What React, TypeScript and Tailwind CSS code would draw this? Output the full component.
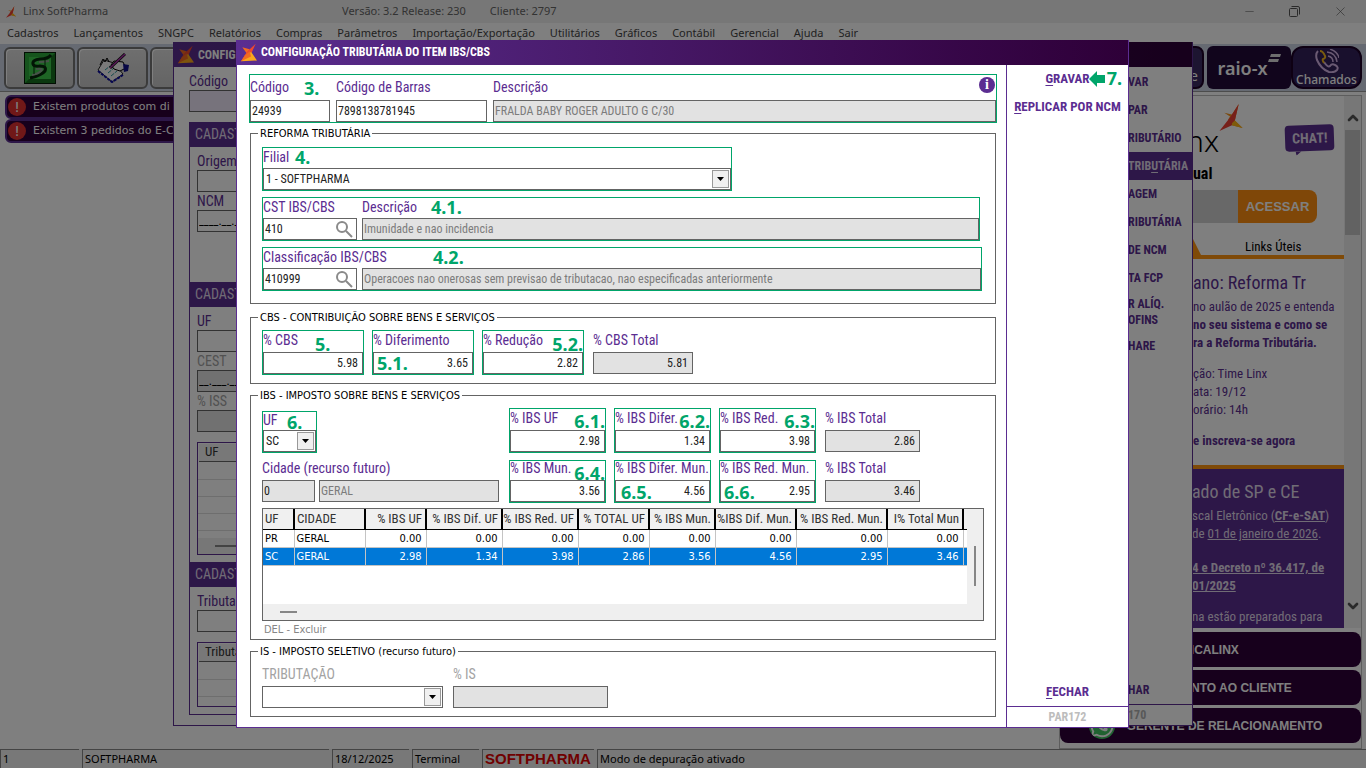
import { useId, useState } from 'react';
import type { ReactNode } from 'react';
import { ChevronDown, ChevronUp, Minus, X } from 'lucide-react';
import { FaWhatsapp } from 'react-icons/fa';

const menuItems = [
  'Cadastros', 'Lançamentos', 'SNGPC', 'Relatórios', 'Compras', 'Parâmetros', 'Importação/Exportação',
  'Utilitários', 'Gráficos', 'Contábil', 'Gerencial', 'Ajuda', 'Sair',
];

const columns = [
  { title: 'UF', width: 'w-[31px]' },
  { title: 'CIDADE', width: 'w-[71px]' },
  { title: '% IBS UF', width: 'w-[61px]' },
  { title: '% IBS Dif. UF', width: 'w-[76px]' },
  { title: '% IBS Red. UF', width: 'w-[76px]' },
  { title: '% TOTAL UF', width: 'w-[71px]' },
  { title: '% IBS Mun.', width: 'w-[66px]' },
  { title: '%IBS Dif. Mun.', width: 'w-[81px]' },
  { title: '% IBS Red. Mun.', width: 'w-[91px]' },
  { title: 'I% Total Mun', width: 'w-[76px]' },
];

const rows = [
  ['PR', 'GERAL', '0.00', '0.00', '0.00', '0.00', '0.00', '0.00', '0.00', '0.00'],
  ['SC', 'GERAL', '2.98', '1.34', '3.98', '2.86', '3.56', '4.56', '2.95', '3.46'],
];

function LinxMark({ className }: { className: string }) {
  return (
    <svg viewBox="0 0 24 28" className={className} aria-hidden="true">
      <path d="M5 9 L13 11 L20 0 L16 17 L24 25 L13 22 L9 16 L11 13 Z" fill="#f7941d" />
      <path d="M20 0 L16 17 L13 22 L0 28 L11 14 Z" fill="#ee4035" />
      <path d="M13 20 L16 17 L24 25 L13 22 Z" fill="#fdb515" />
    </svg>
  );
}

function TitleMark({ className }: { className: string }) {
  return (
    <svg viewBox="0 0 24 28" className={className} aria-hidden="true">
      <path d="M2 6 L13 9 L9 16 Z" fill="#f26a21" />
      <path d="M22 1 L16 14 L11 22 L0 27 L9 13 Z" fill="#f0492e" />
      <path d="M15 13 L24 26 L0 27 L10 19 Z" fill="#fba81c" />
      <path d="M13 12 L15 20 L0 27 L6 18 Z" fill="#f26a21" />
    </svg>
  );
}

// Número da etapa sobre o campo
function Mark({ n, place }: { n: string; place: string }) {
  return (
    <span
      className={`pointer-events-none absolute z-10 font-['Noto_Sans',sans-serif] text-lg leading-[18px] font-bold text-[#00a56a] ${place}`}
    >
      {n}
    </span>
  );
}

const boxClass = 'block h-[22px] w-full border border-[#646464] text-xs leading-5 outline-none';
const labelClass = 'block text-sm whitespace-nowrap';

interface FieldProps {
  label: string;
  value: string;
  labelHeight?: string;
  width?: string;
  marked?: boolean;
  numeric?: boolean;
  disabled?: boolean;
  total?: boolean;
  search?: boolean;
  children?: ReactNode;
}

function Field({
  label, value, labelHeight = 'leading-[18px] pb-0.5', width = '', marked, numeric, disabled, total, search, children,
}: FieldProps) {
  const id = useId();
  return (
    <div className={`relative ${marked ? 'border border-[#00a56a]' : ''} ${width}`}>
      <label htmlFor={id} className={`${labelClass} ${labelHeight} text-[#5b2d91]`}>
        {label}
      </label>
      <div className="relative">
        <input
          id={id}
          defaultValue={value}
          disabled={disabled}
          readOnly={total}
          className={`${boxClass} ${numeric ? 'pr-1 text-right' : 'pl-px'} ${
            disabled ? 'bg-[#e2e2e2] text-[#7c7c7c]' : total ? 'bg-[#e2e2e2] text-[#222]' : 'bg-white text-[#222]'
          }`}
        />
        {search && (
          <button aria-label="Pesquisar" className="absolute top-px right-1 flex h-5 w-[18px] items-center justify-center text-[#8a8a8a]">
            <svg viewBox="0 0 18 18" className="size-[18px]" fill="none" stroke="currentColor" strokeWidth="2" aria-hidden="true">
              <circle cx="7" cy="7" r="5" />
              <path d="M11 11 L17 17" />
            </svg>
          </button>
        )}
      </div>
      {children}
    </div>
  );
}

interface ComboProps {
  label: string;
  value: string;
  labelHeight: string;
  width: string;
  marked?: boolean;
  muted?: boolean;
  children?: ReactNode;
}

function Combo({ label, value, labelHeight, width, marked, muted, children }: ComboProps) {
  const id = useId();
  return (
    <div className={`relative ${marked ? 'border border-[#00a56a]' : ''} ${width}`}>
      <label htmlFor={id} className={`${labelClass} ${labelHeight} ${muted ? 'text-[#a3a3a3]' : 'text-[#5b2d91]'}`}>
        {label}
      </label>
      <div className="relative">
        <select id={id} className={`${boxClass} appearance-none bg-white pl-0.5 text-[#222]`}>
          <option>{value}</option>
        </select>
        <span className="pointer-events-none absolute top-0.5 right-0.5 flex h-[18px] w-[17px] items-center justify-center border border-[#999] bg-[#f0f0f0]">
          <svg width="7" height="4" viewBox="0 0 7 4" aria-hidden="true">
            <path d="M0 0 H7 L3.5 4 Z" fill="#000" />
          </svg>
        </span>
      </div>
      {children}
    </div>
  );
}

function Group({ title, className, children }: { title: string; className: string; children: ReactNode }) {
  return (
    <fieldset className={`mx-px border border-[#646464] pr-[11px] pl-[11px] ${className}`}>
      <legend className="-ml-1 px-0.5 font-['DejaVu_Sans_Condensed','DejaVu_Sans',sans-serif] text-[11px] leading-4 text-black">
        {title}
      </legend>
      {children}
    </fieldset>
  );
}

function TitleBar({ children }: { children: ReactNode }) {
  return (
    <header className="flex h-[25px] items-center gap-1 bg-linear-to-r from-[#5b2e91] to-[#2e0038] pl-1 text-xs font-bold text-white">
      <TitleMark className="h-[19px] w-4" />
      <h2 className="whitespace-nowrap">{children}</h2>
    </header>
  );
}

function SideButton({ first, rest }: { first: string; rest: string }) {
  return (
    <button className="flex h-7 w-full items-center justify-center text-[13px] font-bold text-[#5b2d91]">
      <span className="underline underline-offset-2">{first}</span>
      {rest}
    </button>
  );
}

function RateTable() {
  const [selected, setSelected] = useState(1);
  return (
    <div className="mt-[5px] flex h-[113px] border border-[#646464] bg-[#efefef]">
      <div className="flex min-w-0 flex-1 flex-col">
        <div className="flex-1 overflow-hidden bg-white">
          <table className="w-full table-fixed border-collapse">
            <thead>
              <tr className="h-[21px] border-b border-black bg-[#f0f0f0] text-[13px] leading-5 text-[#333]">
                {columns.map(({ title, width }, i) => (
                  <th
                    key={title}
                    className={`${width} border-r-2 border-black p-0 font-normal whitespace-nowrap ${i < 2 ? 'pl-0.5 text-left' : 'pr-[3px] text-right'}`}
                  >
                    {title}
                  </th>
                ))}
                <th className="p-0" />
              </tr>
            </thead>
            <tbody className="font-['DejaVu_Sans_Condensed','DejaVu_Sans',sans-serif] text-[11px]">
              {rows.map((row, r) => (
                <tr
                  key={row[0]}
                  onClick={() => setSelected(r)}
                  className={`h-[18px] border-b border-[#c4c4c4] ${r === selected ? 'bg-[#0078d7] text-white' : 'bg-white text-black'}`}
                >
                  {row.map((cell, i) => (
                    <td key={i} className={`border-r border-[#c4c4c4] p-0 leading-4 ${i < 2 ? 'pl-0.5 text-left' : 'pr-1 text-right'}`}>
                      {cell}
                    </td>
                  ))}
                  <td className="p-0" />
                </tr>
              ))}
            </tbody>
          </table>
        </div>
        <div className="flex h-4 items-center pl-[17px]">
          <div className="h-0.5 w-[17px] bg-[#868686]" />
        </div>
      </div>
      <div className="flex w-4 justify-center pt-[37px]">
        <div className="h-10 w-0.5 bg-[#868686]" />
      </div>
    </div>
  );
}

function TaxDialog() {
  return (
    <section className="w-full max-w-[893px] border border-t-0 border-[#5b2d91] bg-white">
      <TitleBar>CONFIGURAÇÃO TRIBUTÁRIA DO ITEM IBS/CBS</TitleBar>
      <div className="flex">
        <form className="min-w-0 flex-1 pt-[9px] pr-[9px] pb-[10px] pl-3" onSubmit={(e) => e.preventDefault()}>
          <div className="relative flex gap-[6px] border border-[#00a56a]">
            <Field label="Código" value="24939" labelHeight="leading-[25px]" width="w-20" />
            <Field label="Código de Barras" value="7898138781945" labelHeight="leading-[25px]" width="w-[151px]" />
            <Field label="Descrição" value="FRALDA BABY ROGER ADULTO G C/30" labelHeight="leading-[25px]" width="flex-1" disabled />
            <Mark n="3." place="left-[54px] top-1" />
            <span className="absolute top-0.5 right-px flex size-4 items-center justify-center rounded-full bg-[#5b2d91] font-['Liberation_Serif',serif] text-sm leading-4 font-bold text-white">
              i
            </span>
          </div>

          <Group title="REFORMA TRIBUTÁRIA" className="mt-[3px] pt-[5px] pb-3">
            <div className="flex flex-col gap-1.5">
              <Combo label="Filial" value="1 - SOFTPHARMA" labelHeight="leading-[18px] pb-0.5" width="w-[470px]" marked>
                <Mark n="4." place="left-8 top-0" />
              </Combo>
              <div className="relative flex w-[718px] gap-[5px] border border-[#00a56a]">
                <Field label="CST IBS/CBS" value="410" width="w-[94px]" search />
                <Field label="Descrição" value="Imunidade e nao incidencia" width="flex-1" disabled />
                <Mark n="4.1." place="left-[168px] top-0" />
              </div>
              <div className="relative flex w-[720px] gap-[5px] border border-[#00a56a]">
                <Field label="Classificação IBS/CBS" value="410999" width="w-[94px]" search />
                <div className="flex-1 pt-5">
                  <input
                    aria-label="Descrição da classificação"
                    disabled
                    defaultValue="Operacoes nao onerosas sem previsao de tributacao, nao especificadas anteriormente"
                    className={`${boxClass} bg-[#e2e2e2] pl-px text-[#7c7c7c]`}
                  />
                </div>
                <Mark n="4.2." place="left-[170px] top-0" />
              </div>
            </div>
          </Group>

          <Group title="CBS - CONTRIBUIÇÃO SOBRE BENS E SERVIÇOS" className="mt-1.5 pt-1 pb-2">
            <div className="flex items-end gap-2">
              <Field label="% CBS" value="5.98" labelHeight="leading-[19px] pb-0.5" width="w-[102px]" marked numeric>
                <Mark n="5." place="left-[52px] top-1" />
              </Field>
              <Field label="% Diferimento" value="3.65" labelHeight="leading-[19px] pb-0.5" width="w-[102px]" marked numeric>
                <Mark n="5.1." place="left-1 top-[23px]" />
              </Field>
              <Field label="% Redução" value="2.82" labelHeight="leading-[19px] pb-0.5" width="w-[102px]" marked numeric>
                <Mark n="5.2." place="right-0 top-1" />
              </Field>
              <div className="pb-px pl-px">
                <Field label="% CBS Total" value="5.81" labelHeight="leading-[19px] pb-0.5" width="w-[100px]" total numeric />
              </div>
            </div>
          </Group>

          <Group title="IBS - IMPOSTO SOBRE BENS E SERVIÇOS" className="mt-1 pt-1">
            <div className="flex items-end gap-2">
              <div className="w-[239px]">
                <Combo label="UF" value="SC" labelHeight="leading-4 pb-0.5" width="w-[55px]" marked>
                  <Mark n="6." place="left-6 top-px" />
                </Combo>
              </div>
              <Field label="% IBS UF" value="2.98" labelHeight="leading-[19px] pb-0.5" width="w-[97px]" marked numeric>
                <Mark n="6.1." place="right-0 top-[3px]" />
              </Field>
              <Field label="% IBS Difer." value="1.34" labelHeight="leading-[19px] pb-0.5" width="w-[97px]" marked numeric>
                <Mark n="6.2." place="right-0 top-[3px]" />
              </Field>
              <Field label="% IBS Red." value="3.98" labelHeight="leading-[19px] pb-0.5" width="w-[97px]" marked numeric>
                <Mark n="6.3." place="right-0 top-[3px]" />
              </Field>
              <div className="pb-px pl-px">
                <Field label="% IBS Total" value="2.86" labelHeight="leading-[19px] pb-0.5" width="w-[95px]" total numeric />
              </div>
            </div>
            <div className="mt-[7px] flex items-end gap-2">
              <div className="w-[239px] pr-0.5 pb-px">
                <label htmlFor="cidade" className={`${labelClass} pb-1 leading-4 text-[#5b2d91]`}>
                  Cidade (recurso futuro)
                </label>
                <div className="flex gap-1">
                  <div className="w-[53px]">
                    <input id="cidade" readOnly defaultValue="0" className={`${boxClass} bg-[#e2e2e2] pl-px text-[#222]`} />
                  </div>
                  <div className="flex-1">
                    <input aria-label="Nome da cidade" disabled defaultValue="GERAL" className={`${boxClass} bg-[#e2e2e2] pl-px text-[#7c7c7c]`} />
                  </div>
                </div>
              </div>
              <Field label="% IBS Mun." value="3.56" labelHeight="leading-[15px] pb-1" width="w-[97px]" marked numeric>
                <Mark n="6.4." place="right-0 top-[3px]" />
              </Field>
              <Field label="% IBS Difer. Mun." value="4.56" labelHeight="leading-[15px] pb-1" width="w-[97px]" marked numeric>
                <Mark n="6.5." place="left-1.5 top-[22px]" />
              </Field>
              <Field label="% IBS Red. Mun." value="2.95" labelHeight="leading-[15px] pb-1" width="w-[97px]" marked numeric>
                <Mark n="6.6." place="left-1 top-[22px]" />
              </Field>
              <div className="pb-px pl-px">
                <Field label="% IBS Total" value="3.46" labelHeight="leading-[15px] pb-1" width="w-[95px]" total numeric />
              </div>
            </div>
            <RateTable />
            <p className="pl-0.5 font-['DejaVu_Sans_Condensed','DejaVu_Sans',sans-serif] text-[11px] leading-[18px] text-[#868686]">
              DEL - Excluir
            </p>
          </Group>

          <Group title="IS - IMPOSTO SELETIVO (recurso futuro)" className="mt-1 pt-1 pb-2">
            <div className="flex gap-[10px]">
              <Combo label="TRIBUTAÇÃO" value="" labelHeight="leading-5 pb-0.5" width="w-[181px]" muted />
              <div className="w-[155px]">
                <label htmlFor="is" className={`${labelClass} pb-0.5 leading-5 text-[#a3a3a3]`}>% IS</label>
                <input id="is" disabled className={`${boxClass} bg-[#e2e2e2]`} />
              </div>
            </div>
          </Group>
        </form>

        <aside className="flex w-[122px] flex-col border-l border-[#5b2d91]">
          <div className="relative">
            <SideButton first="G" rest="RAVAR" />
            <svg viewBox="0 0 16 16" className="absolute top-1.5 right-[23px] size-4" aria-hidden="true">
              <path d="M0 8 L8 0 V4 H16 V12 H8 V16 Z" fill="#00a56a" />
            </svg>
            <Mark n="7." place="right-1.5 top-1" />
          </div>
          <SideButton first="R" rest="EPLICAR POR NCM" />
          <div className="mt-auto">
            <SideButton first="F" rest="ECHAR" />
          </div>
          <p className="border-t border-[#5b2d91] text-center text-xs leading-5 font-bold text-[#bdbdbd]">PAR172</p>
        </aside>
      </div>
    </section>
  );
}

function ItemField({ label, value = '', muted }: { label: string; value?: string; muted?: boolean }) {
  const id = useId();
  return (
    <div>
      <label htmlFor={id} className={`${labelClass} leading-[18px] ${muted ? 'text-[#a3a3a3]' : 'text-[#5b2d91]'}`}>{label}</label>
      <input id={id} defaultValue={value} className={`${boxClass} pl-px text-black ${muted ? 'bg-[#e2e2e2]' : 'bg-white'}`} />
    </div>
  );
}

function PanelTitle() {
  return <h3 className="h-[25px] bg-[#5b2e91] pl-[5px] text-sm leading-[25px] text-[#e0d8ea]">CADAST</h3>;
}

function EmptyGrid({ title, height, scroll }: { title: string; height: string; scroll?: boolean }) {
  return (
    <div className={`mt-[10px] flex flex-col border border-[#5b2d91] ${height}`}>
      <div className="m-px h-[18px] border-r border-b border-[#666] bg-[#f0f0f0] pl-1.5 text-[13px] leading-4 text-[#333]">{title}</div>
      <div className="flex-1 bg-[repeating-linear-gradient(to_bottom,#fff_0_16px,#ddd_16px_17px)]" />
      {scroll && (
        <div className="flex h-4 items-center bg-[#efefef] pl-[17px]">
          <div className="h-0.5 w-16 bg-[#868686]" />
        </div>
      )}
    </div>
  );
}

function ItemDialog() {
  const item = 'flex h-7 w-full items-center text-xs font-bold whitespace-nowrap';
  return (
    <section className="w-full max-w-[1020px] border border-t-0 border-[#5b2d91] bg-white">
      <TitleBar>CONFIG</TitleBar>
      <div className="flex text-[#5b2d91]">
        <div className="min-w-0 flex-1 px-[15px] pt-[5px] pb-[10px]">
          <label htmlFor="item-codigo" className={`${labelClass} leading-[18px]`}>Código</label>
          <input id="item-codigo" className={`${boxClass} bg-[#eee6f8]`} />
          <div className="mt-[10px] border border-t-0 border-[#5b2d91]">
            <PanelTitle />
            <div className="px-[7px] pt-[5px] pb-[50px]">
              <ItemField label="Origem" />
              <ItemField label="NCM" value="____.__.__" />
            </div>
            <PanelTitle />
            <div className="px-[7px] pt-[5px] pb-[7px]">
              <ItemField label="UF" />
              <ItemField label="CEST" value="__.___.__" muted />
              <ItemField label="% ISS" muted />
              <EmptyGrid title="UF" height="h-[113px]" scroll />
            </div>
            <PanelTitle />
            <div className="px-[7px] pt-[5px] pb-[7px]">
              <ItemField label="Tributa" />
              <EmptyGrid title="Tributa" height="h-[65px]" />
            </div>
          </div>
        </div>
        <nav className="flex w-[64px] flex-col pt-px">
          <button className={item}>VAR</button>
          <button className={item}>PAR</button>
          <button className={item}>RIBUTÁRIO</button>
          <button className={`${item} bg-[#5b2e91] text-[#e0d8ea]`}>
            TRIB<span className="underline underline-offset-2">U</span>TÁRIA
          </button>
          <button className={item}>AGEM</button>
          <button className={item}>RIBUTÁRIA</button>
          <button className={item}>DE NCM</button>
          <button className={item}>TA FCP</button>
          <button className="h-10 w-full text-left text-xs leading-4 font-bold whitespace-nowrap">
            R ALÍQ.<br />OFINS
          </button>
          <button className={item}>HARE</button>
          <button className={`${item} mt-auto`}>HAR</button>
          <p className="border-t border-[#5b2d91] text-xs leading-5 font-bold text-[#b0b0b0]">170</p>
        </nav>
      </div>
    </section>
  );
}

function Toolbar() {
  const gray = 'flex h-[42px] w-[71px] items-center justify-center rounded-md border-2 border-[#777] bg-linear-to-b from-[#dedede] to-[#c8c8c8] shadow-[inset_1px_1px_0_#fff]';
  return (
    <div className="flex h-12 items-center gap-0.5 border-b border-[#999] bg-[#ccd4e4] pl-1">
      <button className={gray} aria-label="SoftPharma">
        <svg viewBox="0 0 32 32" className="size-8" aria-hidden="true">
          <rect width="32" height="32" fill="#041f06" />
          <rect x="1" y="1" width="30" height="30" fill="#2da83a" />
          <path d="M1 31 L5 27 H27 V5 L31 1 V31 Z" fill="#16701f" />
          <rect x="5" y="5" width="22" height="22" fill="#3ccb4a" />
          <path d="M27 3 Q24 7 16 7 Q8 8 9 12 Q10 15 16 14 Q23 14 21 19 Q18 23 6 26" fill="none" stroke="#04280a" strokeWidth="3" />
          <path d="M25 9 Q20 10 15 10 M12 17 Q20 16 17 19 Q14 22 8 23" fill="none" stroke="#8ea391" strokeWidth="2" />
          <path d="M10 12 V22 M21 8 V20" stroke="#04280a" strokeWidth="1" />
        </svg>
      </button>
      <button className={gray} aria-label="Lançamentos">
        <svg viewBox="0 0 32 30" className="h-[30px] w-8" aria-hidden="true">
          <path d="M1 17 L7 7 L17 10 L26 21 L15 29 Z" fill="#f4f4f4" stroke="#222" strokeWidth="1" />
          <path d="M1 18 L15 29 L26 22" fill="none" stroke="#0c0ca0" strokeWidth="2" strokeDasharray="3 1" />
          <path d="M3 12 L6 6 L8 9 L10 5 L12 9" fill="none" stroke="#000" strokeWidth="1" />
          <path d="M8 17 L13 13 M11 20 L17 15 M14 23 L20 18" stroke="#2a9aa0" strokeWidth="1" strokeDasharray="4 1" />
          <path d="M14 12 L17 8 L26 9 L29 15 L23 18 L17 16 Z" fill="#f4f4f4" stroke="#000" strokeWidth="1" />
          <path d="M26 11 L32 12 L31 18 L27 19 Z" fill="#10108a" />
          <path d="M13 15 L28 1" stroke="#111" strokeWidth="3" />
          <path d="M13 15 L28 1" stroke="#b030b0" strokeWidth="1.5" />
        </svg>
      </button>
      <button className={gray} aria-label="Caixa" />
      <div className="ml-auto flex items-center pr-1 text-white">
        <button className="flex h-[43px] w-[72px] items-end justify-end rounded-lg border-2 border-[#1c0026] bg-[#3a2a62] pr-1 font-['Noto_Sans',sans-serif] text-sm leading-[22px]">e</button>
        <button className="ml-[3px] flex h-[43px] w-[84px] items-center justify-center rounded-md bg-[#220a38] font-['Noto_Sans',sans-serif] text-lg leading-5 font-semibold">
          raio-x
          <svg viewBox="0 0 13 8" className="mb-5 h-2 w-[13px]" aria-hidden="true">
            <path d="M3 0 H13 L12 3 H2 Z M1 5 H11 L10 8 H0 Z" fill="#ddd" />
          </svg>
        </button>
        <button className="flex h-[43px] w-[71px] flex-col items-center justify-center rounded-xl border-2 border-[#1c0026] bg-[#32205a] font-['Noto_Sans',sans-serif] text-xs leading-[14px] font-medium">
          <svg viewBox="0 0 24 24" className="size-6" fill="none" strokeWidth="2" aria-hidden="true">
            <path d="M3 2 Q0 5 2 11 Q6 20 14 23 Q19 24 22 21 Q24 18 20 16 Q17 14 15 17 Q13 19 9 13" stroke="#d5b5e6" />
            <path d="M5 2 Q8 2 10 7 Q11 9 8 10 Q7 11 9 14" stroke="#f5b91e" />
            <path d="M13 7 Q18 8 18 13 M12 3 Q21 4 22 13 M15 0 Q23 3 24 9" stroke="#d5b5e6" strokeWidth="1.5" />
          </svg>
          Chamados
        </button>
      </div>
    </div>
  );
}

function Alert({ children }: { children: ReactNode }) {
  return (
    <p className="flex h-6 items-center gap-[7px] rounded-md border-2 border-[#5b2e91] bg-[#2e0038] pl-px font-['DejaVu_Sans',Verdana,sans-serif] text-[11px] whitespace-nowrap text-white">
      <span className="flex size-[18px] items-center justify-center rounded-full bg-[#e03030] text-sm leading-4">!</span>
      {children}
    </p>
  );
}

function NewsPanel() {
  const purpleButton = "flex h-[35px] w-full items-center justify-center gap-3 rounded-lg bg-[#2e0038] font-['Liberation_Sans',sans-serif] text-xs font-bold whitespace-nowrap text-white";
  return (
    <aside className="mr-1 flex w-[303px] flex-col border border-[#bbb] bg-white">
      <div className="flex h-[532px] bg-white">
        <div className="min-w-0 flex-1 overflow-hidden whitespace-nowrap text-[#5b2e91]">
          <div className="pl-[133px]">
            <div className="flex h-[66px] items-start pt-2 text-black">
              <span className="w-[26px] pt-[19px] text-right font-['Noto_Sans',sans-serif] text-3xl leading-9 font-light [direction:rtl]">nx</span>
              <LinxMark className="h-[27px] w-6" />
              <span className="relative mt-[21px] mr-2.5 ml-auto -rotate-2 rounded-sm bg-[#5b2e91] px-[7px] text-sm leading-[26px] font-bold text-[#e0d8ea]">
                CHAT!
                <svg viewBox="0 0 6 4" className="absolute top-full left-2.5 h-1 w-1.5" aria-hidden="true">
                  <path d="M0 0 H6 L1 4 Z" fill="#5b2e91" />
                </svg>
              </span>
            </div>
            <p className="text-base leading-6 font-bold text-black">ual</p>
            <div className="mt-1 flex h-[33px]">
              <input aria-label="Buscar" className="w-[45px] bg-[#d0d0d0]" />
              <button className="w-[79px] rounded-r-lg bg-[#ff8f10] font-['Liberation_Sans',sans-serif] text-[13px] font-bold text-white">ACESSAR</button>
            </div>
            <div className="flex h-8 items-end text-[13px] leading-4 text-black">
              <svg viewBox="0 0 8 16" className="h-4 w-2" aria-hidden="true">
                <path d="M0 0 L8 16 H0 Z" fill="#ff9410" />
              </svg>
              <a href="#links" className="ml-11">Links Úteis</a>
            </div>
          </div>
          <div className="h-1 bg-[#ff9410]" />
          <article className="pt-3 pb-[15px] pl-[133px] text-[13px] leading-[18px]">
            <h3 className="mb-[3px] text-lg leading-6">ano: Reforma Tr</h3>
            <p>no aulão de 2025 e entenda</p>
            <p className="font-bold">no seu sistema e como se</p>
            <p className="font-bold">ra a Reforma Tributária.</p>
            <p className="mt-[13px]">ção: Time Linx</p>
            <p>ata: 19/12</p>
            <p>orário: 14h</p>
            <p className="mt-[13px] font-bold">e inscreva-se agora</p>
          </article>
          <article className="h-full border-t-4 border-[#ff9410] bg-[#5b2e91] pt-[11px] pl-[132px] text-[13px] leading-[18px] text-[#e0d8ea]">
            <h3 className="mb-[3px] text-lg leading-6">ado de SP e CE</h3>
            <p>scal Eletrônico (<a href="#cfe" className="font-bold underline">CF-e-SAT</a>)</p>
            <p>de <a href="#prazo" className="underline">01 de janeiro de 2026</a>.</p>
            <p className="mt-4 font-bold underline">4 e Decreto nº 36.417, de</p>
            <p className="font-bold underline">01/2025</p>
            <p className="mt-[13px]">na estão preparados para</p>
          </article>
        </div>
        <div className="flex w-[17px] flex-col items-center bg-[#efefef] pt-[14px] text-[#555]">
          <ChevronUp size={16} strokeWidth={4} />
          <div className="mt-1 h-[105px] w-[15px] bg-[#c4c4c4]" />
          <ChevronDown size={16} strokeWidth={4} className="mt-auto mb-3.5" />
        </div>
      </div>
      <div className="mt-1 flex flex-col gap-[3px] pb-1">
        <button className={purpleButton}>DICALINX</button>
        <button className={purpleButton}>ATENDIMENTO AO CLIENTE</button>
        <button className={`${purpleButton} pr-2.5`}>
          <FaWhatsapp size={26} className="rounded-full bg-[#40c463]" />
          GERENTE DE RELACIONAMENTO
        </button>
      </div>
    </aside>
  );
}

function StatusBar() {
  const cell = 'border-t border-l border-[#888] pl-0.5 leading-[18px] whitespace-nowrap';
  return (
    <footer className="flex h-[19px] gap-[3px] bg-[#f0f0f0] font-['Noto_Sans',sans-serif] text-[11px] text-black">
      <span className={`${cell} w-[79px]`}>1</span>
      <span className={`${cell} w-[247px]`}>SOFTPHARMA</span>
      <span className={`${cell} w-[77px]`}>18/12/2025</span>
      <span className={`${cell} w-[67px]`}>Terminal</span>
      <span className={`${cell} w-[112px] font-['Liberation_Sans',sans-serif] text-[15px] font-bold text-[#e00000]`}>SOFTPHARMA</span>
      <span className={`${cell} flex-1`}>Modo de depuração ativado</span>
    </footer>
  );
}

export default function App() {
  return (
    <div className="relative h-screen overflow-hidden bg-white font-['Roboto_Condensed',Roboto,'Liberation_Sans_Narrow',sans-serif]">
      <div className="flex h-full flex-col">
        <header className="flex h-[23px] items-center bg-[#efefef] pl-1.5 font-['Noto_Sans',sans-serif] text-[11px] text-[#666]">
          <LinxMark className="h-3 w-2.5" />
          <h1 className="ml-[7px] w-[319px]">Linx SoftPharma</h1>
          <span>Versão: 3.2 Release: 230</span>
          <span className="ml-6">Cliente: 2797</span>
          <div className="ml-auto flex items-center gap-[33px] pr-[18px] text-[#555]">
            <button aria-label="Minimizar"><Minus size={13} strokeWidth={1} /></button>
            <button aria-label="Restaurar">
              <svg viewBox="0 0 11 11" className="size-[11px]" fill="none" stroke="currentColor" aria-hidden="true">
                <rect x="0.5" y="2.5" width="8" height="8" rx="1" />
                <path d="M2.5 0.5 H9 Q10.5 0.5 10.5 2 V8.5" />
              </svg>
            </button>
            <button aria-label="Fechar"><X size={15} strokeWidth={1} /></button>
          </div>
        </header>
        <nav className="flex h-[21px] items-center gap-[15px] pl-[7px] font-['Noto_Sans',sans-serif] text-[11px] text-[#444]">
          {menuItems.map((name) => (
            <button key={name}>{name}</button>
          ))}
        </nav>
        <Toolbar />
        <div className="flex flex-1 justify-between pt-[3px]">
          <div className="ml-[5px] flex w-[400px] flex-col self-start">
            <Alert>Existem produtos com di</Alert>
            <Alert>Existem 3 pedidos do E-C</Alert>
          </div>
          <NewsPanel />
        </div>
        <StatusBar />
      </div>
      <div className="absolute inset-0 grid place-items-center">
        <ItemDialog />
      </div>
      <div className="absolute inset-0 grid place-items-center bg-black/50 pr-px pb-px">
        <TaxDialog />
      </div>
    </div>
  );
}
